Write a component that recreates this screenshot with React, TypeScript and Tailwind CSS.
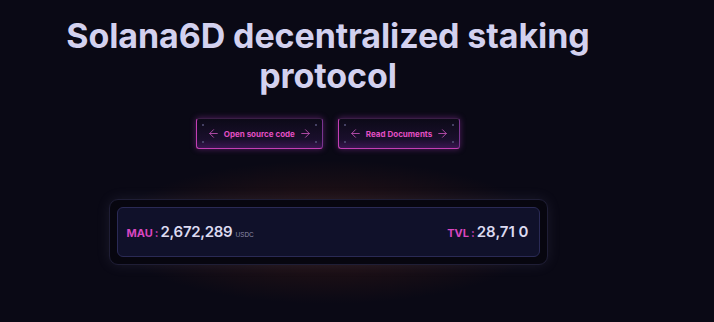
import { ArrowLeft, ArrowRight } from 'lucide-react'

function GlowButton({ label }: { label: string }) {
  return (
    <button className="relative flex h-[31px] items-center gap-[4px] rounded-[3px] border border-[#c43fb4] border-t-[#3a1f45] border-r-[#7a3590] bg-[linear-gradient(180deg,#0c0a18_0%,#1a0f2c_70%,#3a1550_100%)] px-[10px] shadow-[0_0_6px_rgba(217,70,239,0.35)]">
      <span className="absolute left-[5px] top-[5px] h-[2px] w-[2px] rounded-full bg-[#55527a]" />
      <span className="absolute bottom-[5px] left-[5px] h-[2px] w-[2px] rounded-full bg-[#55527a]" />
      <span className="absolute right-[5px] top-[5px] h-[2px] w-[2px] rounded-full bg-[#55527a]" />
      <span className="absolute bottom-[5px] right-[5px] h-[2px] w-[2px] rounded-full bg-[#55527a]" />
      <ArrowLeft className="h-[13px] w-[13px] text-[#b04aa6]" strokeWidth={1.8} />
      <span className="text-[8px] font-bold text-[#e24fc4]">{label}</span>
      <ArrowRight className="h-[13px] w-[13px] text-[#b04aa6]" strokeWidth={1.8} />
    </button>
  )
}

export default function App() {
  return (
    <div
      className="relative h-[322px] w-[714px] overflow-hidden bg-[#0a0915]"
      style={{ fontFamily: 'Inter, "Noto Sans", sans-serif' }}
    >
      <div className="flex w-[656px] flex-col items-center pt-[16px]">
        <h1 className="text-center text-[34px] font-bold leading-[40px] tracking-[-0.1px] text-[#d3d1ef]">
          Solana6D decentralized staking
          <br />
          protocol
        </h1>

        <div className="mt-[22px] flex gap-[15px]">
          <GlowButton label="Open source code" />
          <GlowButton label="Read Documents" />
        </div>

        <div className="relative mt-[50px]">
          <div className="pointer-events-none absolute -inset-x-[20px] -inset-y-[45px] bg-[radial-gradient(ellipse_at_center,rgba(130,50,20,0.32)_0%,rgba(10,9,21,0)_65%)]" />
          <div className="relative h-[66px] w-[439px] rounded-[9px] border border-[#1f1e36] bg-[#07060f] p-[7px] shadow-[0_0_14px_rgba(150,150,190,0.12)]">
            <div className="flex h-full items-center justify-between rounded-[6px] border border-[#2a2a55] bg-[#10112a] pl-[9px] pr-[10px]">
              <div className="flex items-baseline">
                <span className="text-[11px] font-bold text-[#d946c0]">MAU</span>
                <span className="mx-[2px] text-[11px] font-bold text-[#d946c0]">:</span>
                <span className="text-[15px] font-semibold tracking-[-0.3px] text-[#dcdaf0]">2,672,289</span>
                <span className="ml-[3px] text-[6.5px] text-[#8c8aa8]">USDC</span>
              </div>
              <div className="flex items-baseline">
                <span className="text-[11px] font-bold text-[#d946c0]">TVL</span>
                <span className="mx-[2px] text-[11px] font-bold text-[#d946c0]">:</span>
                <span className="text-[15px] font-semibold text-[#dcdaf0]">28,71 0</span>
              </div>
            </div>
          </div>
        </div>
      </div>
    </div>
  )
}
